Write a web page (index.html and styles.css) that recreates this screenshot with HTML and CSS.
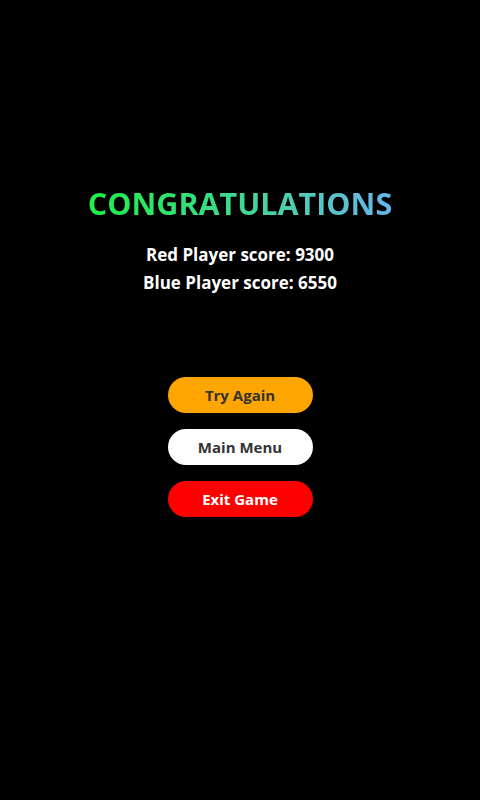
FILE: index.html
```html
<!DOCTYPE html>
<html>
<head>
<meta charset="utf-8">
<link rel="stylesheet" href="styles.css">
</head>
<body>
<main class="screen">
  <h1 class="title">CONGRATULATIONS</h1>
  <div class="scores">
    <p class="score">Red Player score: 9300</p>
    <p class="score">Blue Player score: 6550</p>
  </div>
  <div class="actions">
    <button class="btn btn-orange">Try Again</button>
    <button class="btn btn-white">Main Menu</button>
    <button class="btn btn-red">Exit Game</button>
  </div>
</main>
</body>
</html>
```

FILE: styles.css
```css
html, body {
  margin: 0;
  padding: 0;
  background: #000;
}
.screen {
  width: 480px;
  height: 800px;
  display: flex;
  flex-direction: column;
  align-items: center;
  font-family: "Open Sans", "Noto Sans", sans-serif;
  font-weight: 700;
}
.title {
  margin: 183px 0 0;
  font-size: 30.5px;
  line-height: 40px;
  font-weight: 700;
  background: linear-gradient(90deg, #1ef046 0%, #3fd992 50%, #68b6ee 100%);
  -webkit-background-clip: text;
  background-clip: text;
  color: transparent;
}
.scores {
  margin-top: 18px;
  display: flex;
  flex-direction: column;
  align-items: center;
}
.score {
  margin: 0;
  color: #fff;
  font-size: 17px;
  line-height: 28px;
}
.actions {
  margin-top: 80px;
  display: flex;
  flex-direction: column;
  gap: 16px;
}
.btn {
  width: 145px;
  height: 36px;
  border: none;
  border-radius: 18px;
  font-family: "Open Sans", "Noto Sans", sans-serif;
  font-weight: 700;
  font-size: 15px;
  color: #333;
  padding: 0;
}
.btn-orange { background: #ffa500; }
.btn-white { background: #fff; }
.btn-red { background: #ff0000; color: #fff; }
```
